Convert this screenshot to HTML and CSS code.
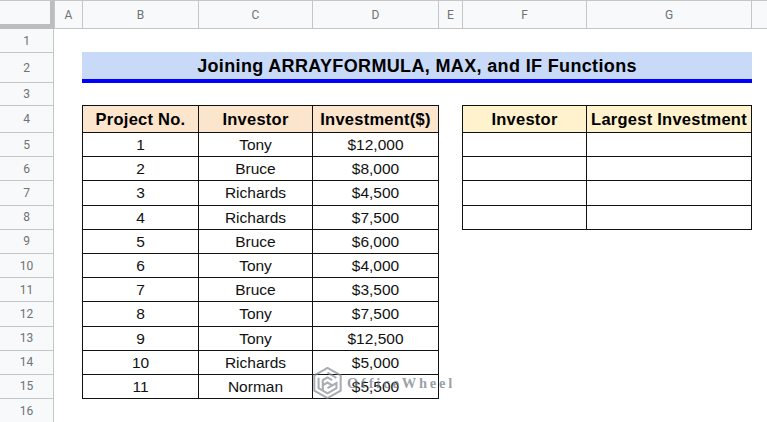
FILE: index.html
```html
<!DOCTYPE html>
<html lang="en">
<head>
<meta charset="utf-8">
<title>Joining ARRAYFORMULA, MAX, and IF Functions</title>
<link rel="stylesheet" href="styles.css">
</head>
<body>
<main class="sheet">
  <div class="corner"></div>
  <div class="ch">A</div><div class="ch">B</div><div class="ch">C</div><div class="ch">D</div><div class="ch">E</div><div class="ch">F</div><div class="ch">G</div><div class="ch"></div>

  <div class="rh">1</div><div class="blank wide8"></div>

  <div class="rh">2</div><div class="blank"></div><div class="title">Joining ARRAYFORMULA, MAX, and IF Functions</div><div class="blank"></div>

  <div class="rh">3</div><div class="blank wide8"></div>

  <div class="rh">4</div><div class="blank"></div>
  <div class="c head peach">Project No.</div><div class="c head peach">Investor</div><div class="c head peach edge-r">Investment($)</div>
  <div class="blank"></div>
  <div class="c head cream">Investor</div><div class="c head cream edge-r">Largest Investment</div><div class="blank"></div>

  <div class="rh">5</div><div class="blank"></div><div class="c">1</div><div class="c">Tony</div><div class="c edge-r">$12,000</div><div class="blank"></div><div class="c"></div><div class="c edge-r"></div><div class="blank"></div>
  <div class="rh">6</div><div class="blank"></div><div class="c">2</div><div class="c">Bruce</div><div class="c edge-r">$8,000</div><div class="blank"></div><div class="c"></div><div class="c edge-r"></div><div class="blank"></div>
  <div class="rh">7</div><div class="blank"></div><div class="c">3</div><div class="c">Richards</div><div class="c edge-r">$4,500</div><div class="blank"></div><div class="c"></div><div class="c edge-r"></div><div class="blank"></div>
  <div class="rh">8</div><div class="blank"></div><div class="c">4</div><div class="c">Richards</div><div class="c edge-r">$7,500</div><div class="blank"></div><div class="c edge-b"></div><div class="c edge-rb"></div><div class="blank"></div>
  <div class="rh">9</div><div class="blank"></div><div class="c">5</div><div class="c">Bruce</div><div class="c edge-r">$6,000</div><div class="blank wide4"></div>
  <div class="rh">10</div><div class="blank"></div><div class="c">6</div><div class="c">Tony</div><div class="c edge-r">$4,000</div><div class="blank wide4"></div>
  <div class="rh">11</div><div class="blank"></div><div class="c">7</div><div class="c">Bruce</div><div class="c edge-r">$3,500</div><div class="blank wide4"></div>
  <div class="rh">12</div><div class="blank"></div><div class="c">8</div><div class="c">Tony</div><div class="c edge-r">$7,500</div><div class="blank wide4"></div>
  <div class="rh">13</div><div class="blank"></div><div class="c">9</div><div class="c">Tony</div><div class="c edge-r">$12,500</div><div class="blank wide4"></div>
  <div class="rh">14</div><div class="blank"></div><div class="c">10</div><div class="c">Richards</div><div class="c edge-r">$5,000</div><div class="blank wide4"></div>
  <div class="rh">15</div><div class="blank"></div><div class="c edge-b">11</div><div class="c edge-b">Norman</div><div class="c edge-rb">$5,500</div><div class="blank wide4"></div>
  <div class="rh">16</div><div class="blank wide8"></div>

  <div class="watermark">
    <svg class="wm-logo" viewBox="0 0 30 34" aria-hidden="true">
      <path d="M15 1 L29 9 V25 L15 33 L1 25 V9 Z" />
      <path d="M15 6 L24.5 11.5 M5.5 11.5 V22.5 L15 28 L24.5 22.5 V17 L15 22.5" />
      <path d="M10 25 V14 L15 11 L20 14 M10 19.5 L15 16.5 L20 19.5" />
    </svg>
    <span class="wm-text">OfficeWheel</span>
  </div>
</main>
</body>
</html>
```
FILE: styles.css
```css
* { box-sizing: border-box; }
html, body { margin: 0; padding: 0; background: #fff; overflow: hidden; }
.sheet {
  position: relative;
  display: grid;
  width: 767px;
  height: 422px;
  grid-template-columns: 54px 28px 116px 114px 126px 24px 124px 165px 16px;
  grid-template-rows: 29px 23px 30px 23px 27px repeat(11, 24.2px) 24px;
  font-family: "Liberation Sans", Arial, sans-serif;
  color: #000;
  overflow: hidden;
}
.corner {
  background: #f8f9fa;
  border-top: 1px solid #c4c7c5;
  border-right: 4px solid #bdbdbd;
  border-bottom: 5px solid #bdbdbd;
}
.ch {
  display: flex;
  align-items: center;
  justify-content: center;
  background: #f8f9fa;
  border-top: 1px solid #c4c7c5;
  border-left: 1px solid #c4c7c5;
  border-bottom: 1px solid #c4c7c5;
  font: 12px Roboto, sans-serif;
  color: #6f7276;
}
.rh {
  display: flex;
  align-items: center;
  justify-content: center;
  background: #f8f9fa;
  border-right: 1px solid #c4c7c5;
  border-top: 1px solid #c4c7c5;
  font: 12px Roboto, sans-serif;
  color: #6f7276;
}
.ch + .rh { border-top: 0; }
.blank { background: transparent; }
.wide8 { grid-column: span 8; }
.wide4 { grid-column: span 4; }
.title {
  grid-column: span 6;
  display: flex;
  align-items: center;
  justify-content: center;
  margin: 0 -1px -1px 0;
  padding-top: 1px;
  background: #c9daf8;
  border-bottom: 4px solid #0000ff;
  font-weight: 700;
  font-size: 18px;
  letter-spacing: 0.35px;
}
.c {
  display: flex;
  align-items: center;
  justify-content: center;
  padding-top: 1px;
  border-left: 1px solid #111;
  border-top: 1px solid #111;
  font-size: 15.5px;
  color: #111;
  white-space: nowrap;
}
.edge-r { box-shadow: 1px 0 0 #111; }
.edge-b { box-shadow: 0 1px 0 #111; }
.edge-rb { box-shadow: 1px 0 0 #111, 0 1px 0 #111, 1px 1px 0 #111; }
.head { font-weight: 700; font-size: 16.5px; letter-spacing: 0.25px; color: #000; }
.peach { background: #fce5cd; }
.cream { background: #fff2cc; }
.watermark {
  position: absolute;
  left: 313px;
  top: 367px;
  display: flex;
  align-items: center;
  gap: 5px;
  pointer-events: none;
}
.wm-logo {
  width: 29px;
  height: 32px;
  fill: none;
  stroke: #858c96;
  stroke-width: 2.2;
  opacity: 0.7;
}
.wm-text {
  font: 700 14.5px "Liberation Serif", serif;
  letter-spacing: 2.8px;
  color: rgba(110, 118, 130, 0.7);
}
```
